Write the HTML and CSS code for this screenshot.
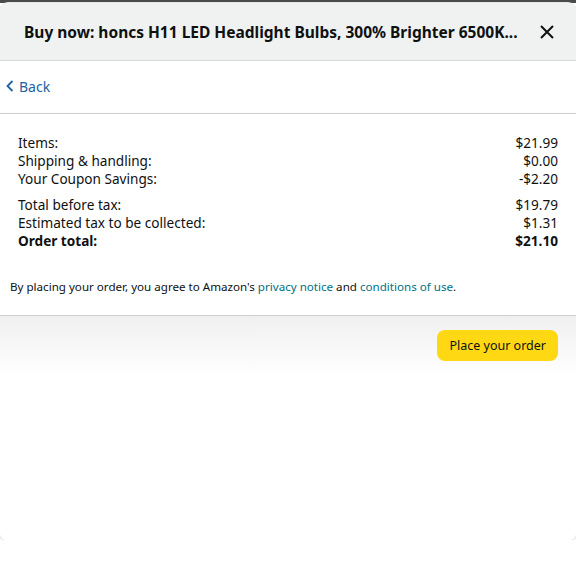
FILE: index.html
```html
<!DOCTYPE html>
<html lang="en">

<head>
    <meta charset="UTF-8">
    <meta name="viewport" content="width=device-width, initial-scale=1.0">
    <title>Buy now</title>
    <link rel="stylesheet" href="styles.css">
</head>

<body>
    <div class="backdrop"></div>
    <div class="modal">
        <div class="modal-header">
            <h1 class="title">Buy now: honcs H11 LED Headlight Bulbs, 300% Brighter 6500K...</h1>
            <button class="close" aria-label="Close">
                <svg width="14" height="14" viewBox="0 0 14 14">
                    <path d="M1 1L13 13M13 1L1 13" stroke="#111" stroke-width="2" fill="none" />
                </svg>
            </button>
        </div>

        <div class="back-row">
            <a href="#" class="back">
                <svg width="8" height="12" viewBox="0 0 8 12">
                    <path d="M6.5 1L1.5 6l5 5" stroke="#2162a1" stroke-width="1.8" fill="none" />
                </svg>
                Back
            </a>
        </div>

        <div class="summary">
            <div class="group">
                <div class="line"><span>Items:</span><span>$21.99</span></div>
                <div class="line"><span>Shipping &amp; handling:</span><span>$0.00</span></div>
                <div class="line"><span>Your Coupon Savings:</span><span>-$2.20</span></div>
            </div>
            <div class="group">
                <div class="line"><span>Total before tax:</span><span>$19.79</span></div>
                <div class="line"><span>Estimated tax to be collected:</span><span>$1.31</span></div>
                <div class="line total"><span>Order total:</span><span>$21.10</span></div>
            </div>
        </div>

        <p class="agree">By placing your order, you agree to Amazon's <a href="#">privacy notice</a> and <a href="#">conditions of use</a>.</p>

        <div class="modal-footer">
            <button class="place">Place your order</button>
        </div>
    </div>
</body>

</html>
```

FILE: styles.css
```css
body {
    margin: 0;
    background: #fff;
    font-family: "Noto Sans", "Open Sans", Arial, sans-serif;
    color: #0f1111;
}

.backdrop {
    height: 3px;
    background: #4a4a4a;
}

.modal {
    height: 537px;
    border-radius: 8px 8px 6px 6px;
    background: #fff;
    box-shadow: 0 0 0 1px #e6e6e6;
    overflow: hidden;
}

.modal-header {
    display: flex;
    align-items: center;
    height: 57px;
    padding: 0 22px 0 24px;
    background: #f0f2f2;
    border-bottom: 1px solid #d5d9d9;
}

.title {
    flex: 1;
    margin: 0;
    font-size: 15.5px;
    font-weight: 700;
    white-space: nowrap;
}

.close {
    margin-left: 20px;
    padding: 0;
    border: none;
    background: none;
    display: flex;
}

.back-row {
    height: 50px;
    display: flex;
    align-items: center;
    padding: 0 0 2px 6px;
    border-bottom: 1px solid #ccc;
}

.back {
    display: flex;
    align-items: center;
    gap: 5px;
    color: #2162a1;
    font-size: 14px;
    text-decoration: none;
}

.summary {
    padding: 20px 18px 0 18px;
    font-size: 13.6px;
    line-height: 18px;
}

.group + .group {
    margin-top: 8px;
}

.line {
    display: flex;
    justify-content: space-between;
}

.total {
    font-weight: 700;
}

.agree {
    margin: 29px 0 0;
    padding: 0 10px;
    font-size: 11.6px;
    line-height: 16px;
    height: 36px;
}

.agree a {
    color: #007185;
    text-decoration: none;
}

.modal-footer {
    display: flex;
    justify-content: flex-end;
    padding: 14px 18px;
    border-top: 1px solid #ccc;
    background: linear-gradient(#f0f0f0, #fff 60px);
}

.place {
    height: 31px;
    padding: 0 12px;
    border: none;
    border-radius: 8px;
    background: #ffd814;
    color: #0f1111;
    font-family: inherit;
    font-size: 12.5px;
}
```
